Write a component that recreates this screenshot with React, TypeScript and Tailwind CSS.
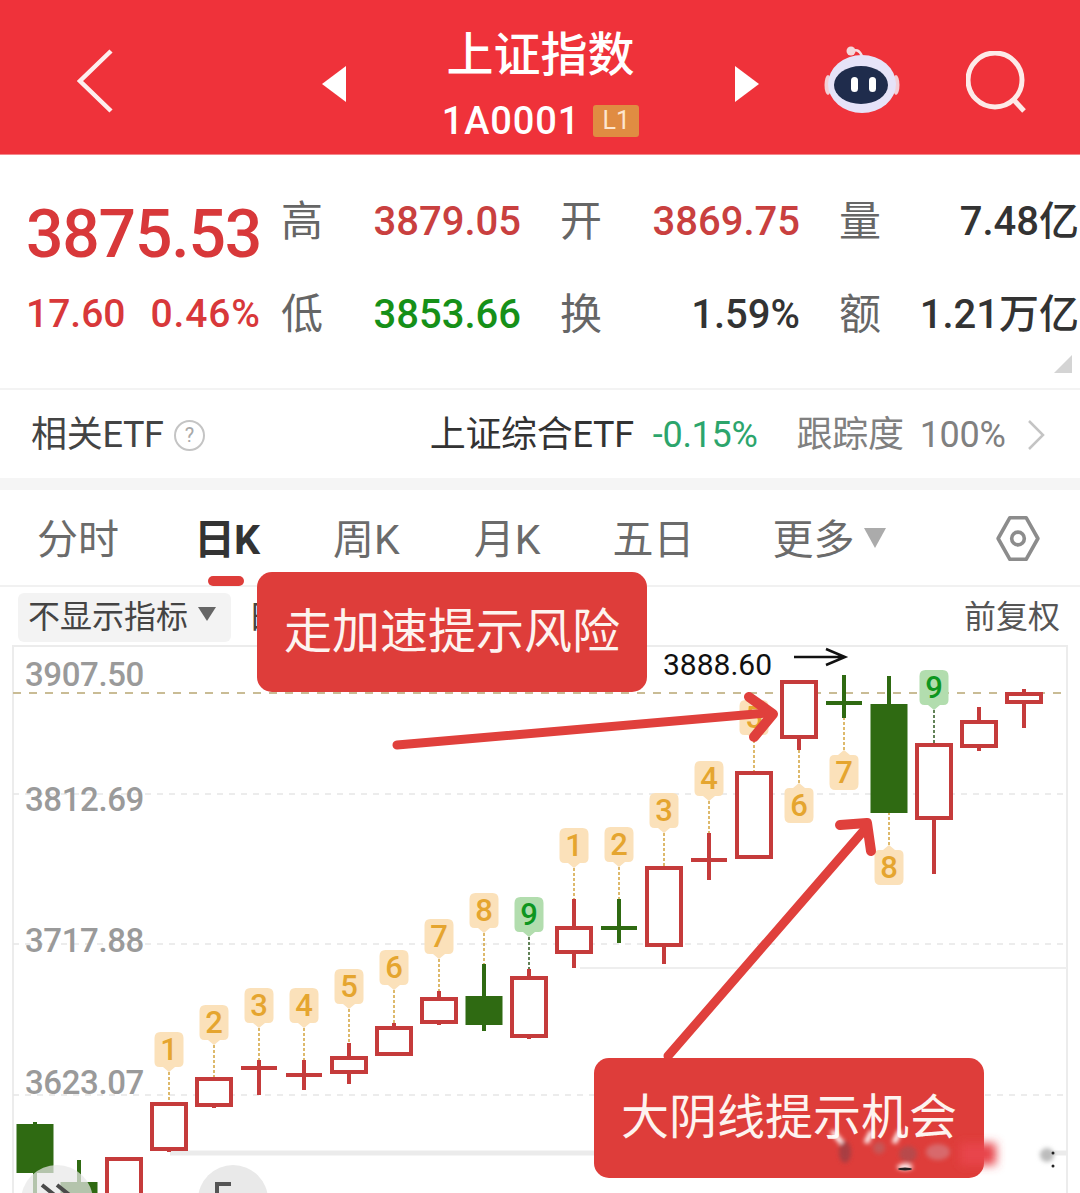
import { useId } from 'react'

const cjk = "font-['Roboto','Noto_Sans_CJK_SC',sans-serif]"

type Candle = { cx: number; top: number; bottom: number; hi: number; lo: number; kind: 'up' | 'down' | 'dojiUp' | 'dojiDown' }

const RED = '#C53B3B'
const GREEN = '#2F6A12'

const candles: Candle[] = [
  { cx: 35, top: 1124, bottom: 1173, hi: 1122, lo: 1200, kind: 'down' },
  { cx: 79, top: 1182, bottom: 1210, hi: 1160, lo: 1210, kind: 'down' },
  { cx: 124, top: 1159, bottom: 1210, hi: 1159, lo: 1210, kind: 'up' },
  { cx: 169, top: 1104, bottom: 1149, hi: 1104, lo: 1152, kind: 'up' },
  { cx: 214, top: 1079, bottom: 1105, hi: 1079, lo: 1108, kind: 'up' },
  { cx: 259, top: 1068, bottom: 1068, hi: 1060, lo: 1095, kind: 'dojiUp' },
  { cx: 304, top: 1075, bottom: 1075, hi: 1060, lo: 1090, kind: 'dojiUp' },
  { cx: 349, top: 1058, bottom: 1072, hi: 1043, lo: 1084, kind: 'up' },
  { cx: 394, top: 1028, bottom: 1054, hi: 1023, lo: 1054, kind: 'up' },
  { cx: 439, top: 999, bottom: 1022, hi: 991, lo: 1025, kind: 'up' },
  { cx: 484, top: 996, bottom: 1025, hi: 964, lo: 1031, kind: 'down' },
  { cx: 529, top: 978, bottom: 1036, hi: 969, lo: 1039, kind: 'up' },
  { cx: 574, top: 928, bottom: 952, hi: 899, lo: 968, kind: 'up' },
  { cx: 619, top: 928, bottom: 928, hi: 899, lo: 943, kind: 'dojiDown' },
  { cx: 664, top: 868, bottom: 945, hi: 868, lo: 964, kind: 'up' },
  { cx: 709, top: 860, bottom: 860, hi: 833, lo: 880, kind: 'dojiUp' },
  { cx: 754, top: 773, bottom: 857, hi: 773, lo: 857, kind: 'up' },
  { cx: 799, top: 682, bottom: 737, hi: 682, lo: 750, kind: 'up' },
  { cx: 844, top: 703, bottom: 703, hi: 675, lo: 718, kind: 'dojiDown' },
  { cx: 889, top: 704, bottom: 813, hi: 676, lo: 813, kind: 'down' },
  { cx: 934, top: 745, bottom: 818, hi: 745, lo: 874, kind: 'up' },
  { cx: 979, top: 722, bottom: 746, hi: 707, lo: 751, kind: 'up' },
  { cx: 1024, top: 694, bottom: 702, hi: 689, lo: 728, kind: 'up' },
]

type Tag = { cx: number; y: number; n: number; below?: boolean; green?: boolean; to: number }

const tags: Tag[] = [
  { cx: 169, y: 1032, n: 1, to: 1104 },
  { cx: 214, y: 1005, n: 2, to: 1079 },
  { cx: 259, y: 988, n: 3, to: 1060 },
  { cx: 304, y: 988, n: 4, to: 1060 },
  { cx: 349, y: 969, n: 5, to: 1043 },
  { cx: 394, y: 950, n: 6, to: 1023 },
  { cx: 439, y: 919, n: 7, to: 991 },
  { cx: 484, y: 893, n: 8, to: 964 },
  { cx: 529, y: 897, n: 9, green: true, to: 969 },
  { cx: 574, y: 828, n: 1, to: 899 },
  { cx: 619, y: 827, n: 2, to: 899 },
  { cx: 664, y: 793, n: 3, to: 868 },
  { cx: 709, y: 761, n: 4, to: 833 },
  { cx: 754, y: 700, n: 5, to: 773 },
  { cx: 799, y: 783, n: 6, below: true, to: 750 },
  { cx: 844, y: 750, n: 7, below: true, to: 718 },
  { cx: 889, y: 845, n: 8, below: true, to: 813 },
  { cx: 934, y: 670, n: 9, green: true, to: 745 },
]

// rounded tag with a small point towards its candle
function tagPath(cx: number, y: number, below?: boolean) {
  const l = cx - 14.5
  const r = cx + 14.5
  if (below) {
    return `M${cx} ${y}L${cx + 6} ${y + 5}H${r - 5}Q${r} ${y + 5} ${r} ${y + 10}V${y + 34}Q${r} ${y + 40} ${r - 6} ${y + 40}H${l + 6}Q${l} ${y + 40} ${l} ${y + 34}V${y + 10}Q${l} ${y + 5} ${l + 5} ${y + 5}H${cx - 6}Z`
  }
  return `M${cx} ${y + 40}L${cx + 6} ${y + 35}H${r - 5}Q${r} ${y + 35} ${r} ${y + 30}V${y + 6}Q${r} ${y} ${r - 6} ${y}H${l + 6}Q${l} ${y} ${l} ${y + 6}V${y + 30}Q${l} ${y + 35} ${l + 5} ${y + 35}H${cx - 6}Z`
}

function CandleMark({ c }: { c: Candle }) {
  const isGreen = c.kind === 'down' || c.kind === 'dojiDown'
  const color = isGreen ? GREEN : RED
  if (c.kind === 'dojiUp' || c.kind === 'dojiDown') {
    return (
      <g stroke={color} strokeWidth={4}>
        <line x1={c.cx} x2={c.cx} y1={c.hi} y2={c.lo} />
        <line x1={c.cx - 18} x2={c.cx + 18} y1={c.top} y2={c.top} />
      </g>
    )
  }
  return (
    <g>
      <line x1={c.cx} x2={c.cx} y1={c.hi} y2={c.lo} stroke={color} strokeWidth={4} />
      {c.kind === 'down' ? (
        <rect x={c.cx - 18.5} y={c.top} width={37} height={c.bottom - c.top} fill={color} />
      ) : (
        <rect x={c.cx - 17} y={c.top} width={34} height={c.bottom - c.top} fill="#fff" stroke={color} strokeWidth={4} />
      )}
    </g>
  )
}

function TagMark({ t }: { t: Tag }) {
  const lineColor = t.green ? '#2f5a22' : '#D2A23C'
  const lineStart = t.below ? t.y : t.y + 40
  return (
    <g>
      <line x1={t.cx} x2={t.cx} y1={lineStart} y2={t.to} stroke={lineColor} strokeWidth={1.5} strokeDasharray="3 2" />
      <path d={tagPath(t.cx, t.y, t.below)} fill={t.green ? '#B2DDAE' : '#FBE1BA'} />
      <text
        x={t.cx}
        y={t.below ? t.y + 33 : t.y + 28}
        textAnchor="middle"
        fontSize={31}
        fontWeight={500}
        fill={t.green ? '#0E961F' : '#E5A52F'}
      >
        {t.n}
      </text>
    </g>
  )
}

function Chart() {
  const labels = [
    { y: 686, text: '3907.50' },
    { y: 811, text: '3812.69' },
    { y: 952, text: '3717.88' },
    { y: 1094, text: '3623.07' },
  ]
  return (
    <svg viewBox="0 644 1080 549" className={`block w-[1080px] h-[549px] ${cjk}`}>
      <path d="M13 1193V646H1067V1193" fill="none" stroke="#ececec" strokeWidth={2} />
      <line x1={13} x2={1067} y1={693} y2={693} stroke="#C9BC95" strokeWidth={2} strokeDasharray="8 8" />
      {[794, 944, 1095].map((y) => (
        <line key={y} x1={13} x2={1067} y1={y} y2={y} stroke="#e6e6e6" strokeWidth={1.5} strokeDasharray="6 6" />
      ))}
      <line x1={580} x2={1067} y1={968} y2={968} stroke="#eeeeee" strokeWidth={2} />
      <line x1={170} x2={1067} y1={1153} y2={1153} stroke="#ebebeb" strokeWidth={5} />

      {labels.map((l) => (
        <text key={l.text} x={25} y={l.y} fontSize={33} letterSpacing={-0.4} fontWeight={500} fill="#9a9a9a">
          {l.text}
        </text>
      ))}
      <text x={663} y={675} fontSize={30} fill="#111">
        3888.60
      </text>
      <path d="M794 657H845M826 649L845 657L826 665" fill="none" stroke="#111" strokeWidth={2.5} />

      {tags.map((t) => (
        <TagMark key={`${t.cx}-${t.n}`} t={t} />
      ))}
      {candles.map((c) => (
        <CandleMark key={c.cx} c={c} />
      ))}

      <circle cx={57} cy={1201} r={36} fill="#e8e8e8" fillOpacity={0.72} />
      <path d="M42 1185L62 1201M57 1185L77 1201" stroke="#4a4a4a" strokeWidth={4} fill="none" />
      <circle cx={233} cy={1200} r={35} fill="#e9e9e9" />
      <path d="M231 1184H217V1195" stroke="#555" strokeWidth={4} fill="none" />

      <path d="M397 745L768 713" stroke="#E0403C" strokeWidth={9} strokeLinecap="round" fill="none" />
      <path d="M749 697L773 714L754 737" stroke="#E0403C" strokeWidth={10} strokeLinecap="round" strokeLinejoin="round" fill="none" />
      <path d="M668 1056L866 828" stroke="#E0403C" strokeWidth={9} strokeLinecap="round" fill="none" />
      <path d="M840 825L867 823L871 851" stroke="#E0403C" strokeWidth={10} strokeLinecap="round" strokeLinejoin="round" fill="none" />
    </svg>
  )
}

function StatColumn({ label1, value1, tone1, label2, value2, tone2 }: {
  label1: string; value1: string; tone1: string; label2: string; value2: string; tone2: string
}) {
  return (
    <div className="w-[240px] shrink-0">
      <div className="h-[93px] flex items-center justify-between">
        <span className="text-[42px] leading-none text-[#666666]">{label1}</span>
        <span className={`text-[40px] leading-none font-medium whitespace-nowrap ${tone1}`}>{value1}</span>
      </div>
      <div className="h-[93px] flex items-center justify-between">
        <span className="text-[42px] leading-none text-[#666666]">{label2}</span>
        <span className={`text-[40px] leading-none font-medium whitespace-nowrap ${tone2}`}>{value2}</span>
      </div>
    </div>
  )
}

function Header() {
  return (
    <header className="h-[155px] bg-[#EF323A] border-b border-[#f4878c] flex items-center text-white">
      <svg viewBox="0 0 36 64" className="w-[36px] h-[64px] ml-[77px] mt-[8px] shrink-0">
        <path d="M34 2L3 32L34 62" fill="none" stroke="#fdeeee" strokeWidth={4.5} />
      </svg>
      <svg viewBox="0 0 24 36" className="w-[24px] h-[36px] ml-[209px] mt-[14px] shrink-0">
        <path d="M24 0L0 18L24 36Z" fill="#fff" />
      </svg>
      <div className="w-[389px] shrink-0 flex flex-col items-center mt-[13px]">
        <div className="text-[47px] leading-[56px] font-medium">上证指数</div>
        <div className="flex items-center mt-[18px]">
          <span className="text-[38px] leading-[40px] tracking-[0.9px] font-medium">1A0001</span>
          <span className="ml-[13px] w-[46px] h-[32px] bg-[#E08C42] rounded-[3px] text-[25px] leading-[32px] text-center text-[#fde6cf]">L1</span>
        </div>
      </div>
      <svg viewBox="0 0 24 36" className="w-[24px] h-[36px] mt-[14px] shrink-0">
        <path d="M0 0L24 18L0 36Z" fill="#fff" />
      </svg>
      <svg viewBox="0 0 76 70" className="w-[76px] h-[70px] ml-[65px] mt-[4px] shrink-0">
        <path d="M27 8Q34 3 38 12" fill="none" stroke="#f6dfe4" strokeWidth={2.5} />
        <circle cx={27} cy={7} r={4.5} fill="#f4d8dc" />
        <ellipse cx={4} cy={41} rx={3.5} ry={10} fill="#f3cfd6" />
        <ellipse cx={72} cy={41} rx={3.5} ry={10} fill="#f3cfd6" />
        <ellipse cx={38} cy={40} rx={34} ry={29} fill="#e6e3f8" />
        <ellipse cx={37} cy={41} rx={27} ry={19} fill="#1f2c4c" />
        <rect x={27} y={33} width={7} height={15} rx={3.5} fill="#fff" />
        <rect x={45} y={33} width={7} height={15} rx={3.5} fill="#fff" />
      </svg>
      <svg viewBox="0 0 62 62" className="w-[62px] h-[62px] ml-[66px] mt-[10px] shrink-0">
        <circle cx={29} cy={29} r={27} fill="none" stroke="#fdeae8" strokeWidth={5} />
        <path d="M47 48L58 60" stroke="#fdeae8" strokeWidth={5} />
      </svg>
    </header>
  )
}

function Tabs() {
  return (
    <div className="relative h-[97px] border-b-2 border-[#f1f1f1] flex items-center pt-[5px] text-[41px] leading-none text-[#6b6b6b]">
      <span className="ml-[37px]">分时</span>
      <span className="ml-[75px] font-bold text-[#333333] tracking-[-1px]">日K</span>
      <span className="ml-[74px]">周K</span>
      <span className="ml-[74px]">月K</span>
      <span className="ml-[72px]">五日</span>
      <span className="ml-[78px]">更多</span>
      <svg viewBox="0 0 22 20" className="w-[22px] h-[20px] ml-[9px] mt-[-4px] shrink-0">
        <path d="M0 0H22L11 20Z" fill="#ababab" />
      </svg>
      <svg viewBox="0 0 48 52" className="w-[48px] h-[47px] ml-[108px] mt-[-4px] shrink-0">
        <path d="M15 3H33L46 26L33 49H15L2 26Z" fill="none" stroke="#8c8c8c" strokeWidth={4} strokeLinejoin="round" />
        <circle cx={24} cy={26} r={7} fill="none" stroke="#8c8c8c" strokeWidth={4} />
      </svg>
      <div className="absolute left-[208px] top-[86px] w-[36px] h-[10px] rounded-full bg-[#DE3D3A]" />
    </div>
  )
}

function Watermark() {
  const id = useId()
  return (
    <svg viewBox="820 1125 260 60" className="absolute left-[820px] top-[1125px] w-[260px] h-[60px]">
      <defs>
        <filter id={`${id}wide`} x="-30%" y="-100%" width="160%" height="300%">
          <feGaussianBlur stdDeviation="5" />
        </filter>
        <filter id={`${id}soft`} x="-60%" y="-60%" width="220%" height="220%">
          <feGaussianBlur stdDeviation="2" />
        </filter>
      </defs>
      <rect x={990} y={1142} width={55} height={22} fill="#ffffff" filter={`url(#${id}wide)`} />
      <rect x={960} y={1143} width={36} height={22} fill="#E8454C" filter={`url(#${id}wide)`} />
      <g filter={`url(#${id}soft)`}>
        <path d="M832 1131L842 1143M872 1131L866 1143M900 1131L894 1143" stroke="#ffffff" strokeWidth={5} />
        <ellipse cx={845} cy={1152} rx={6} ry={11} fill="#a83e42" />
        <ellipse cx={879} cy={1148} rx={6} ry={6} fill="#c65757" />
        <ellipse cx={908} cy={1154} rx={9} ry={8} fill="#b84a4c" />
        <ellipse cx={938} cy={1152} rx={12} ry={8} fill="#d8696c" />
        <ellipse cx={905} cy={1167} rx={8} ry={3} fill="#ffffff" />
        <ellipse cx={1047} cy={1155} rx={7} ry={7} fill="#bcbcbc" />
      </g>
      <ellipse cx={905} cy={1169} rx={7} ry={1.5} fill="#222" />
      <circle cx={1053} cy={1153} r={1.5} fill="#222" />
      <circle cx={1053} cy={1166} r={1.5} fill="#222" />
    </svg>
  )
}

export default function App() {
  return (
    <div className={`relative w-[1080px] h-[1193px] overflow-hidden bg-white ${cjk}`}>
      <Header />

      <section className="relative h-[233px] flex items-start">
        <div className="w-[281px] shrink-0 pl-[26px] pt-[40px]">
          <div className="text-[66px] leading-[80px] font-medium text-[#D8383A] tracking-[-1.2px]">3875.53</div>
          <div className="flex justify-between pr-[20px] mt-[16px] text-[39px] leading-[46px] font-medium text-[#D8383A]">
            <span>17.60</span>
            <span className="tracking-[0.9px]">0.46%</span>
          </div>
        </div>
        <div className="flex gap-[39px] pt-[20px]">
          <StatColumn label1="高" value1="3879.05" tone1="text-[#C9403F]" label2="低" value2="3853.66" tone2="text-[#169018]" />
          <StatColumn label1="开" value1="3869.75" tone1="text-[#C9403F]" label2="换" value2="1.59%" tone2="text-[#333333]" />
          <StatColumn label1="量" value1="7.48亿" tone1="text-[#333333]" label2="额" value2="1.21万亿" tone2="text-[#333333]" />
        </div>
        <div className="absolute left-[1054px] top-[200px] w-0 h-0 border-l-[18px] border-l-transparent border-b-[18px] border-b-[#d4d4d4]" />
      </section>

      <section className="h-[90px] border-t-2 border-[#f3f3f3] flex items-center pt-[2px] text-[36px] leading-none tracking-[-0.3px]">
        <span className="ml-[31px] text-[#444444]">相关ETF</span>
        <span className="ml-[10px] w-[31px] h-[31px] rounded-full border-2 border-[#c4c4c4] text-[#a8a8a8] text-[20px] flex items-center justify-center">?</span>
        <span className="ml-[225px] text-[#333333]">上证综合ETF</span>
        <span className="ml-[19px] text-[#2CA56C]">-0.15%</span>
        <span className="ml-[39px] text-[#808080]">跟踪度</span>
        <span className="ml-[16px] text-[#808080]">100%</span>
        <svg viewBox="0 0 18 32" className="w-[18px] h-[32px] ml-[21px] shrink-0">
          <path d="M2 2L16 16L2 30" fill="none" stroke="#c4c4c4" strokeWidth={2.5} />
        </svg>
      </section>

      <div className="h-[12px] bg-[#f5f5f5]" />

      <Tabs />

      <div className="h-[57px] flex items-center pt-[3px] text-[32px] leading-none">
        <div className="ml-[18px] w-[213px] h-[49px] rounded-[6px] bg-[#f3f3f3] flex items-center pl-[10px] text-[#444444]">
          <span className="whitespace-nowrap">不显示指标</span>
          <svg viewBox="0 0 18 14" className="w-[18px] h-[14px] ml-[10px] mt-[-6px] shrink-0">
            <path d="M0 0H18L9 14Z" fill="#666666" />
          </svg>
        </div>
        <span className="ml-[17px] text-[#444444]">日</span>
        <span className="ml-auto mr-[20px] text-[#555555]">前复权</span>
      </div>

      <Chart />

      <div className="absolute left-[257px] top-[572px] w-[390px] h-[120px] rounded-[15px] bg-[#DE3D3A] flex items-center justify-center text-[48px] leading-none text-[#fdf3ef]">
        走加速提示风险
      </div>
      <div className="absolute left-[594px] top-[1058px] w-[390px] h-[120px] rounded-[15px] bg-[#DE3D3A] flex items-center justify-center text-[48px] leading-none text-[#fdf3ef]">
        大阴线提示机会
      </div>

      <Watermark />
    </div>
  )
}
